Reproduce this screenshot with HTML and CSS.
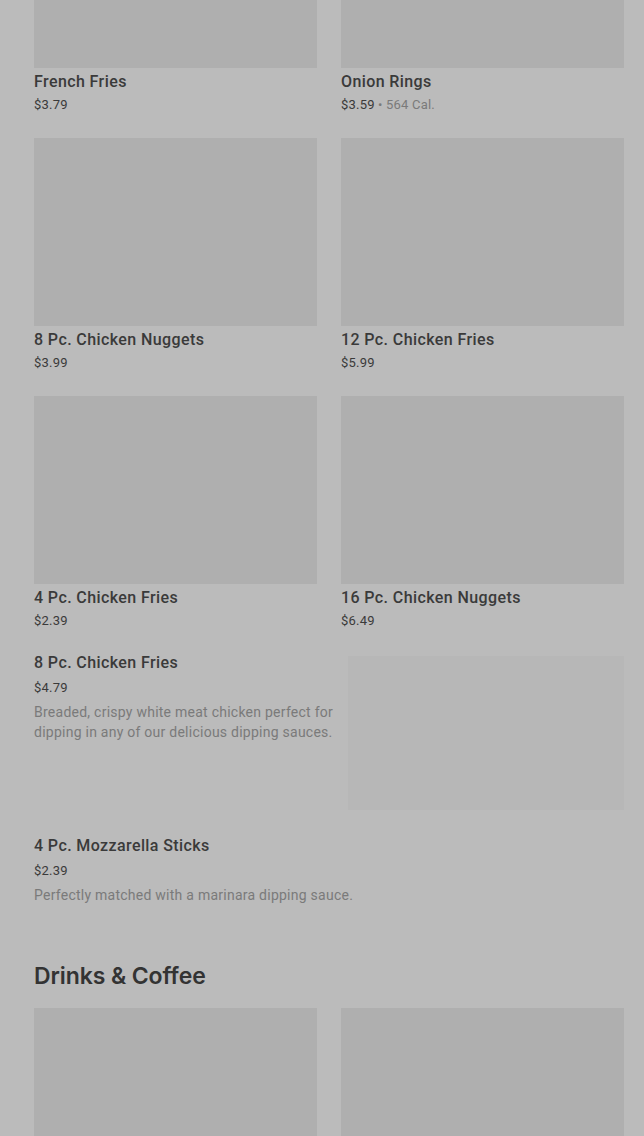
FILE: index.html
```html
<!DOCTYPE html>
<html>
<head>
<meta charset="utf-8">
<link rel="stylesheet" href="styles.css">
</head>
<body>
<main class="page">
  <section class="grid grid-first">
    <div class="card">
      <div class="thumb"></div>
      <div class="name">French Fries</div>
      <div class="meta"><span class="price">$3.79</span></div>
    </div>
    <div class="card">
      <div class="thumb"></div>
      <div class="name">Onion Rings</div>
      <div class="meta"><span class="price">$3.59</span><span class="cal"> • 564 Cal.</span></div>
    </div>
    <div class="card">
      <div class="thumb"></div>
      <div class="name">8 Pc. Chicken Nuggets</div>
      <div class="meta"><span class="price">$3.99</span></div>
    </div>
    <div class="card">
      <div class="thumb"></div>
      <div class="name">12 Pc. Chicken Fries</div>
      <div class="meta"><span class="price">$5.99</span></div>
    </div>
    <div class="card">
      <div class="thumb"></div>
      <div class="name">4 Pc. Chicken Fries</div>
      <div class="meta"><span class="price">$2.39</span></div>
    </div>
    <div class="card">
      <div class="thumb"></div>
      <div class="name">16 Pc. Chicken Nuggets</div>
      <div class="meta"><span class="price">$6.49</span></div>
    </div>
  </section>

  <section class="list">
    <div class="row">
      <div class="row-text">
        <div class="name">8 Pc. Chicken Fries</div>
        <div class="row-price">$4.79</div>
        <div class="desc">Breaded, crispy white meat chicken perfect for dipping in any of our delicious dipping sauces.</div>
      </div>
      <div class="row-thumb"></div>
    </div>
    <div class="row row-plain">
      <div class="row-text">
        <div class="name">4 Pc. Mozzarella Sticks</div>
        <div class="row-price">$2.39</div>
        <div class="desc">Perfectly matched with a marinara dipping sauce.</div>
      </div>
    </div>
  </section>

  <h2 class="section-title">Drinks &amp; Coffee</h2>
  <section class="grid">
    <div class="card">
      <div class="thumb"></div>
    </div>
    <div class="card">
      <div class="thumb"></div>
    </div>
  </section>
</main>
</body>
</html>
```
FILE: styles.css
```css
html, body {
  margin: 0;
  padding: 0;
  background: #bbbbbb;
  height: 1136px;
  overflow: hidden;
}
body {
  font-family: Roboto, "Liberation Sans", sans-serif;
  color: #363636;
}
.page {
  padding: 0 20px 0 34px;
  margin-top: -120px;
}
.grid {
  display: grid;
  grid-template-columns: 283px 283px;
  column-gap: 24px;
  row-gap: 23px;
}
.card {
  display: flex;
  flex-direction: column;
}
.thumb {
  height: 188px;
  background: #afafaf;
}
.name {
  font-size: 16px;
  line-height: 20px;
  font-weight: 500;
  color: #3a3a3a;
  letter-spacing: 0.4px;
}
.card .name {
  margin-top: 4px;
}
.meta {
  margin-top: 3px;
  font-size: 13px;
  line-height: 20px;
  letter-spacing: 0.2px;
}
.price {
  color: #3a3a3a;
}
.cal {
  color: #7a7a7a;
}
.list {
  margin-top: 21px;
  display: flex;
  flex-direction: column;
}
.row {
  display: flex;
  gap: 14px;
  height: 183px;
}
.row-text {
  flex: 1;
  padding-top: 1px;
}
.row-thumb {
  width: 276px;
  height: 154px;
  margin-top: 4px;
  background: #b7b7b7;
}
.row-plain {
  height: auto;
}
.row-price {
  margin-top: 5px;
  font-size: 13px;
  line-height: 20px;
  letter-spacing: 0.2px;
  color: #3a3a3a;
}
.desc {
  margin-top: 4px;
  font-size: 14px;
  line-height: 20px;
  letter-spacing: 0.25px;
  color: #7a7a7a;
}
.section-title {
  margin: 56px 0 17px;
  font-family: Inter, "Liberation Sans", sans-serif;
  font-size: 23px;
  line-height: 30px;
  font-weight: 600;
  letter-spacing: -0.1px;
  color: #333333;
}
```
